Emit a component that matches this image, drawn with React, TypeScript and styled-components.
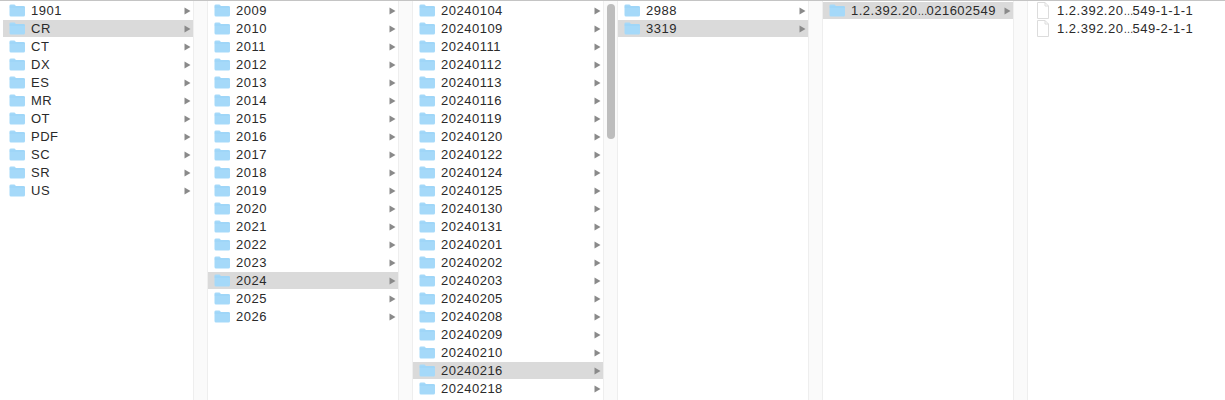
import React from 'react'
import styled, { createGlobalStyle } from 'styled-components'

const GlobalStyle = createGlobalStyle`
  html, body {
    margin: 0;
    padding: 0;
    background: #fff;
  }
`
const Browser = styled.div`
  display: flex;
  width: 1225px;
  height: 400px;
  overflow: hidden;
  box-sizing: border-box;
  border-top: 1px solid #c4c4c4;
  padding-left: 3px;
  background: #fff;
  font-family: "Liberation Sans", Arial, sans-serif;
  font-size: 13px;
  color: #2a2a2a;
`
const Column = styled.div<{ $wide?: boolean }>`
  flex: ${p => (p.$wide ? '1' : '0 0 190px')};
  padding-top: 1px;
  overflow: hidden;
`
const Gutter = styled.div`
  position: relative;
  flex: 0 0 13px;
  background: #fafafa;
  border-left: 1px solid #eeeeee;
  border-right: 1px solid #eeeeee;
`
const Thumb = styled.div`
  position: absolute;
  left: 3px;
  top: 3px;
  width: 8px;
  height: 135px;
  border-radius: 4px;
  background: #bdbdbd;
`
const Row = styled.div<{ $selected?: boolean }>`
  display: flex;
  align-items: center;
  height: 17px;
  margin-bottom: 1px;
  padding: 0 2px 0 6px;
  background: ${p => (p.$selected ? '#dadada' : 'transparent')};
`
const Name = styled.span`
  flex: 1;
  margin-left: 6px;
  white-space: nowrap;
  letter-spacing: 0.5px;
`
const Dots = styled.span`
  font-size: 10px;
  letter-spacing: -2px;
  margin-right: 1px;
`
const FolderSvg = styled.svg`
  flex: none;
  width: 16px;
  height: 13px;
  margin-bottom: 1px;
`
const FileSvg = styled.svg`
  flex: none;
  width: 14px;
  height: 17px;
  margin-left: 2px;
  margin-right: 1px;
`
const ArrowSvg = styled.svg`
  flex: none;
  width: 7px;
  height: 8px;
`

const FolderIcon = () => (
  <FolderSvg viewBox="0 0 16 13">
    <path d="M0.5 1.5 Q0.5 0.5 2 0.5 H5.5 L7 2 H14.5 Q16 2 16 3.5 V11 Q16 12.5 14.5 12.5 H2 Q0.5 12.5 0.5 11 Z" fill="#a5d9f9" />
    <path d="M0.5 3 H16" stroke="#8fcdf5" strokeWidth="0.5" />
  </FolderSvg>
)
const FileIcon = () => (
  <FileSvg viewBox="0 0 14 17">
    <path d="M1.5 0.5 H9 L12.5 4 V16.5 H1.5 Z" fill="#fff" stroke="#dcdcdc" />
    <path d="M9 0.5 V4 H12.5" fill="none" stroke="#dcdcdc" />
  </FileSvg>
)
const ArrowIcon = () => (
  <ArrowSvg viewBox="0 0 7 8">
    <path d="M0.5 0.5 L6.5 4 L0.5 7.5 Z" fill="#8a8a8a" />
  </ArrowSvg>
)

// finder squeezes the middle of long names, the dots are narrower than a plain ellipsis
const renderName = (name: string) => {
  const [head, tail] = name.split('…')
  if (tail === undefined) return name
  return <>{head}<Dots>…</Dots>{tail}</>
}

type ListProps = { items: string[]; selected?: string; files?: boolean; wide?: boolean }

const List = ({ items, selected, files, wide }: ListProps) => (
  <Column $wide={wide}>
    {items.map(name => (
      <Row key={name} $selected={name === selected}>
        {files ? <FileIcon /> : <FolderIcon />}
        <Name>{renderName(name)}</Name>
        {!files && <ArrowIcon />}
      </Row>
    ))}
  </Column>
)

const modalities = ['1901', 'CR', 'CT', 'DX', 'ES', 'MR', 'OT', 'PDF', 'SC', 'SR', 'US']
const years = ['2009', '2010', '2011', '2012', '2013', '2014', '2015', '2016', '2017', '2018', '2019', '2020', '2021', '2022', '2023', '2024', '2025', '2026']
const dates = ['20240104', '20240109', '20240111', '20240112', '20240113', '20240116', '20240119', '20240120', '20240122', '20240124', '20240125', '20240130', '20240131', '20240201', '20240202', '20240203', '20240205', '20240208', '20240209', '20240210', '20240216', '20240218']

const App = () => (
  <>
    <GlobalStyle />
    <Browser>
      <List items={modalities} selected="CR" />
      <Gutter />
      <List items={years} selected="2024" />
      <Gutter />
      <List items={dates} selected="20240216" />
      <Gutter><Thumb /></Gutter>
      <List items={['2988', '3319']} selected="3319" />
      <Gutter />
      <List items={['1.2.392.20…021602549']} selected="1.2.392.20…021602549" />
      <Gutter />
      <List wide files items={['1.2.392.20…549-1-1-1', '1.2.392.20…549-2-1-1']} />
    </Browser>
  </>
)

export default App
